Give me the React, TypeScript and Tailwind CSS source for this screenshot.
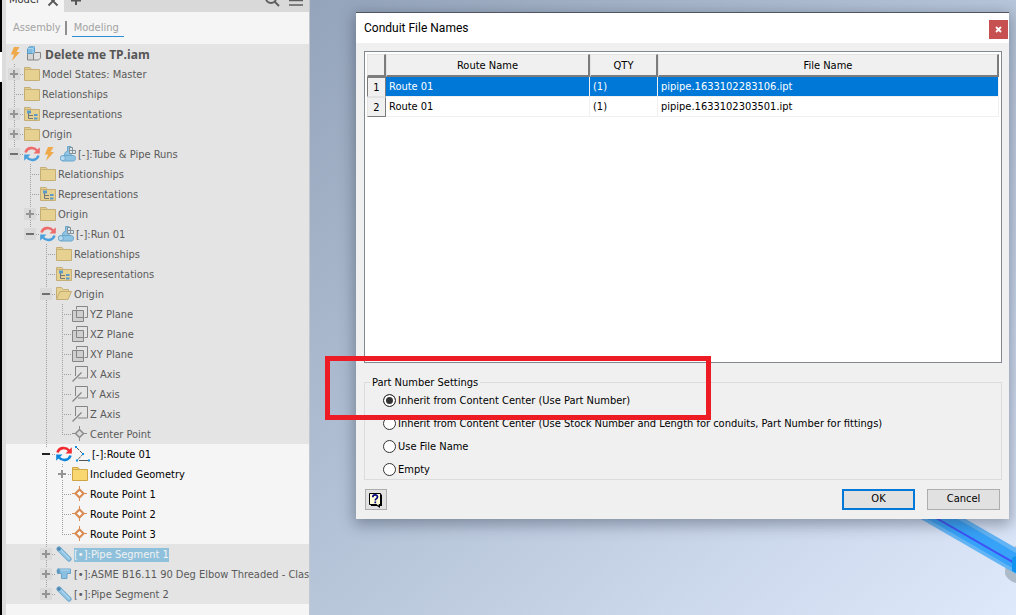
import { useState } from "react";
import type { ReactNode } from "react";

type IconName =
  | "folder"
  | "folderActive"
  | "folderOpen"
  | "views"
  | "plane"
  | "axis"
  | "center"
  | "point"
  | "sync"
  | "syncActive"
  | "bolt"
  | "assembly"
  | "run"
  | "route"
  | "pipe"
  | "elbow";

interface TreeNode {
  label: string;
  depth: number;
  icons: IconName[];
  toggle?: "plus" | "minus";
  last?: boolean;
  active?: boolean;
  selected?: boolean;
}

interface ConduitRow {
  route: string;
  qty: string;
  file: string;
}

const NODES: TreeNode[] = [
  { label: "Model States: Master", depth: 1, icons: ["folder"], toggle: "plus" },
  { label: "Relationships", depth: 1, icons: ["folder"] },
  { label: "Representations", depth: 1, icons: ["views"], toggle: "plus" },
  { label: "Origin", depth: 1, icons: ["folder"], toggle: "plus" },
  { label: "[-]:Tube & Pipe Runs", depth: 1, icons: ["sync", "bolt", "run"], toggle: "minus", last: true },
  { label: "Relationships", depth: 2, icons: ["folder"] },
  { label: "Representations", depth: 2, icons: ["views"] },
  { label: "Origin", depth: 2, icons: ["folder"], toggle: "plus" },
  { label: "[-]:Run 01", depth: 2, icons: ["sync", "run"], toggle: "minus", last: true },
  { label: "Relationships", depth: 3, icons: ["folder"] },
  { label: "Representations", depth: 3, icons: ["views"] },
  { label: "Origin", depth: 3, icons: ["folderOpen"], toggle: "minus" },
  { label: "YZ Plane", depth: 4, icons: ["plane"] },
  { label: "XZ Plane", depth: 4, icons: ["plane"] },
  { label: "XY Plane", depth: 4, icons: ["plane"] },
  { label: "X Axis", depth: 4, icons: ["axis"] },
  { label: "Y Axis", depth: 4, icons: ["axis"] },
  { label: "Z Axis", depth: 4, icons: ["axis"] },
  { label: "Center Point", depth: 4, icons: ["center"], last: true },
  { label: "[-]:Route 01", depth: 3, icons: ["syncActive", "route"], toggle: "minus", active: true },
  { label: "Included Geometry", depth: 4, icons: ["folderActive"], toggle: "plus", active: true },
  { label: "Route Point 1", depth: 4, icons: ["point"], active: true },
  { label: "Route Point 2", depth: 4, icons: ["point"], active: true },
  { label: "Route Point 3", depth: 4, icons: ["point"], last: true, active: true },
  { label: "[•]:Pipe Segment 1", depth: 3, icons: ["pipe"], toggle: "plus", selected: true },
  { label: "[•]:ASME B16.11 90 Deg Elbow Threaded - Class", depth: 3, icons: ["elbow"], toggle: "plus" },
  { label: "[•]:Pipe Segment 2", depth: 3, icons: ["pipe"], toggle: "plus", last: true },
];

const ROWS: ConduitRow[] = [
  { route: "Route 01", qty: "(1)", file: "pipipe.1633102283106.ipt" },
  { route: "Route 01", qty: "(1)", file: "pipipe.1633102303501.ipt" },
];

const SETTINGS = [
  "Inherit from Content Center (Use Part Number)",
  "Inherit from Content Center (Use Stock Number and Length for conduits, Part Number for fittings)",
  "Use File Name",
  "Empty",
];

const folder = (fill: string, stroke: string) => (
  <g fill={fill} stroke={stroke}>
    <path d="M.5 3.5v11h15v-11H7.5z" />
    <path d="M.5 3.5v-2h5.500l1.500 2z" />
  </g>
);

const sync = (red: string, blue: string) => (
  <g fill="none" strokeWidth="2.600">
    <path d="M1.500 6.500C3 1.500 9.500.5 13 4.500" stroke={red} />
    <path d="M15.800 1.200v6.300H9.500z" fill={red} />
    <path d="M14.500 9.500C13 14.500 6.500 15.500 3 11.500" stroke={blue} />
    <path d="M.2 14.800V8.500h6.300z" fill={blue} />
  </g>
);

const ICONS: Record<IconName, ReactNode> = {
  folder: folder("#e6d190", "#c5ae76"),
  folderActive: folder("#f8d771", "#cda544"),
  folderOpen: (
    <g fill="#e6d190" stroke="#c5ae76">
      <path d="M.5 13.500v-12h5l1.500 2h5.500v3" />
      <path d="M.5 13.500l3.500-8h11.500l-3.500 8z" />
    </g>
  ),
  views: (
    <g>
      {folder("#e6d190", "#c5ae76")}
      <path d="M4.500 7v5.500H9M4.500 9.500H9" fill="none" stroke="#777" />
      <path d="M3 4.500h4v3H3zM10 8h3.500v2H10zM10 11.500h3.500v2H10z" fill="#5b9bc9" />
    </g>
  ),
  plane: (
    <g fill="none" stroke="#858585">
      <path d="M4.500 3.500v-3h11v11h-3" />
      <path d="M.5 4.500h11v11H.5z" fill="#cfcfcf" />
      <path d="M4.500 4.500v7h7" />
    </g>
  ),
  axis: (
    <g fill="none" stroke="#858585">
      <path d="M3.500 10V.5h12v11.500H6" />
      <path d="M.5 15.500L9.500 6.500" strokeWidth="1.300" />
    </g>
  ),
  center: (
    <g stroke="#8b8b8b" fill="none">
      <path d="M7.500 0v3M7.500 12v3M0 7.500h3M12 7.500h3" />
      <path d="M7.500 3.500l4 4-4 4-4-4z" fill="#dadada" strokeWidth="1.500" />
    </g>
  ),
  point: (
    <g stroke="#d98d55" fill="none">
      <path d="M7.500 0v3M7.500 12v3M0 7.500h3M12 7.500h3" />
      <path d="M7.500 3.500l4 4-4 4-4-4z" fill="#fff" strokeWidth="2.200" />
    </g>
  ),
  sync: sync("#ee6b6b", "#4b9fdc"),
  syncActive: sync("#f2292f", "#0c86dd"),
  bolt: <path d="M6 1h5.500L8.500 6H12L4 15l2-6.500H2.800z" fill="#f0a94a" />,
  assembly: (
    <g strokeLinejoin="round">
      <path d="M1.500 7.500h6v6.500h-6z" fill="#d4d4d4" stroke="#858585" />
      <path d="M7.500 8l1.500-1.500h5.500V12l-2 2h-5z" fill="#e0e0e0" stroke="#858585" />
      <path d="M1.500 2.500L3.500.8h5v5L7 7.500H1.500z" fill="#7fbce0" stroke="#5a9cc6" />
      <path d="M1.500 2.500H7v5M7 2.500L8.500.8" fill="none" stroke="#a9d4ed" />
    </g>
  ),
  run: (
    <g>
      <path d="M2.500 9.500h11c2.600 0 2.600 5.500 0 5.500h-11z" fill="#8fc3e4" stroke="#6ba6cc" />
      <path d="M4.500 9.500c0-3 1-4 3-4v-5h3.500v9z" fill="#8fc3e4" stroke="#6ba6cc" />
      <circle cx="2.800" cy="12.200" r="2.600" fill="#b5daf0" stroke="#6ba6cc" />
      <path d="M9.500 1.500h3v3h-3zM9.500 4.500h3v3h-3zM12.500 4.500h3v3h-3z" fill="#dfe8ee" stroke="#858f96" />
    </g>
  ),
  route: (
    <g>
      <path d="M3 2l6 6-5.500 6" fill="none" stroke="#555" strokeDasharray="3 1" />
      <path d="M5 14.500h9" stroke="#555" />
      <path d="M1 0h2v2H1zM8 7h2v2H8zM2 13.500h2v2H2zM14 13.500h2v2h-2z" fill="#0f8ce0" />
    </g>
  ),
  pipe: (
    <g strokeLinecap="round">
      <path d="M3 3l10 10" stroke="#6ba4cb" strokeWidth="5" />
      <path d="M3.500 3.500l9.300 9.300" stroke="#93c6e6" strokeWidth="3.500" />
      <path d="M5.500 4.500l8 8" stroke="#b2d9f0" strokeWidth="1" />
      <circle cx="3" cy="3" r="1.800" fill="#4f86ad" />
    </g>
  ),
  elbow: (
    <g fill="#8cc0e0" stroke="#6ba4cb">
      <path d="M1.500 3h13v4.500h-3.500v5H5.500v-5h-4z" strokeLinejoin="round" />
      <path d="M2 4h12" stroke="#b2d9f0" />
      <ellipse cx="2.500" cy="5.200" rx="1.500" ry="2.200" fill="#5f97bd" />
    </g>
  ),
};

const Icon = ({ name }: { name: IconName }) => (
  <svg className="h-4 w-4 shrink-0" viewBox="0 0 16 16" aria-hidden="true">
    {ICONS[name]}
  </svg>
);

// One 16px step of the tree's dotted guide lines
const Guide = ({ node }: { node: TreeNode }) => (
  <svg className="h-5 w-[18px] shrink-0" viewBox="0 0 18 20" aria-hidden="true">
    <path
      d={node.last ? "M8.500 0v10" : "M8.500 0v20"}
      stroke="#a0a0a0"
      strokeDasharray="1 1"
    />
    <path d="M8 10.500h10" stroke="#a0a0a0" strokeDasharray="1 1" />
    {node.toggle && (
      <>
        <path d="M2 4h12v12H2z" fill={node.active ? "#f5f5f5" : "#dadada"} />
        <path
          d={node.toggle === "plus" ? "M4 10h8M8 6v8" : "M4 10h8"}
          stroke={node.toggle === "plus" ? "#949494" : node.active ? "#222" : "#707070"}
          strokeWidth="2"
        />
      </>
    )}
  </svg>
);

const TreeRow = ({ node }: { node: TreeNode }) => {
  const color = node.selected
    ? "bg-[#8fc1dc] text-[#f2f2f2]"
    : node.active
      ? "text-black"
      : "text-[#5a5a5a]";

  return (
    <li className={`flex h-5 items-center ${node.active ? "bg-[#f5f5f5]" : ""}`}>
      {Array.from({ length: node.depth - 1 }, (_, level) => (
        <svg key={level} className="h-5 w-4 shrink-0" viewBox="0 0 16 20" aria-hidden="true">
          {level === 2 && (
            <path d="M8.500 0v20" stroke="#a0a0a0" strokeDasharray="1 1" />
          )}
        </svg>
      ))}
      {node.toggle ? (
        <button className="shrink-0" aria-label={`Toggle ${node.label}`}>
          <Guide node={node} />
        </button>
      ) : (
        <Guide node={node} />
      )}
      <div className="flex shrink-0 items-center gap-[2px]">
        {node.icons.map((name) => (
          <Icon key={name} name={name} />
        ))}
        <span className={`mt-[2px] whitespace-nowrap leading-[14px] ${color}`}>{node.label}</span>
      </div>
    </li>
  );
};

const ModelBrowser = () => (
  <aside className="flex w-[304px] shrink-0 flex-col overflow-hidden border-r border-[#c4c8ce] bg-[#f5f5f5]">
    <div className="flex h-3 shrink-0 items-end overflow-hidden bg-[#d9d9d9] text-[#555]">
      <button className="flex h-[23px] w-[58px] items-center gap-2 bg-[#f5f5f5] pl-[3px] text-[#333]">
        Model
        <svg className="h-3 w-3" viewBox="0 0 12 12" aria-hidden="true">
          <path d="M1.500 1.500l9 9M10.500 1.500l-9 9" stroke="#555" strokeWidth="1.800" />
        </svg>
      </button>
      <button className="flex h-6 w-6 items-center justify-center" aria-label="Add tab">
        <svg className="h-3 w-3" viewBox="0 0 12 12" aria-hidden="true">
          <path d="M6 1v10M1 6.500h10" stroke="#555" strokeWidth="2" />
        </svg>
      </button>
      <button className="ml-auto flex h-6 w-6 items-center justify-center" aria-label="Search">
        <svg className="h-4 w-4" viewBox="0 0 16 16" fill="none" stroke="#5f5f5f" strokeWidth="2" aria-hidden="true">
          <circle cx="7" cy="6" r="5" />
          <path d="M10.500 9.500l4.500 4.500" />
        </svg>
      </button>
      <button className="mr-[1px] flex h-6 w-6 items-center justify-center" aria-label="Menu">
        <svg className="h-4 w-4" viewBox="0 0 16 16" stroke="#5f5f5f" strokeWidth="1.500" aria-hidden="true">
          <path d="M1 4.500h14M1 8.500h14M1 13h14" />
        </svg>
      </button>
    </div>

    <nav className="flex h-8 shrink-0 items-center pl-[7px] text-[#a3a3a3]">
      <button className="leading-4">Assembly</button>
      <span className="mr-[5px] ml-[4px] h-[14px] w-[2px] bg-[#8f8f8f]" />
      <button className="mt-px border-b border-[#2b8fd6] pr-[5px] pl-[2px] leading-4">Modeling</button>
    </nav>

    <ul className="bg-[#e4e4e4]">
      <li className="flex h-5 items-center gap-[2px] pl-[2px]">
        <Icon name="bolt" />
        <Icon name="assembly" />
        <span className="mt-[2px] ml-px font-['Open_Sans','Noto_Sans',sans-serif] text-xs leading-[14px] font-bold text-[#555]">
          Delete me TP.iam
        </span>
      </li>
      {NODES.map((node, index) => (
        <TreeRow key={index} node={node} />
      ))}
    </ul>
  </aside>
);

const headerCell =
  "h-[23px] border-t border-r-2 border-b-2 border-l border-t-[#e3e3e3] border-r-[#7c7c7c] border-b-[#7c7c7c] border-l-[#e3e3e3] bg-[#f0f0f0] p-0 pt-[2px] leading-4 font-normal";

const bodyCell = "h-5 border-r border-b border-[#f0f0f0] p-0 pt-px pl-[3px] leading-4";

const FileTable = () => (
  <div className="h-[312px] border border-[#828790] bg-white p-[2px]">
    <table className="w-full table-fixed border-separate border-spacing-0">
      <thead>
        <tr>
          <th className={`w-[19px] ${headerCell}`} aria-label="Row" />
          <th className={`w-[204px] ${headerCell}`}>Route Name</th>
          <th className={`w-[68px] ${headerCell}`}>QTY</th>
          <th className={headerCell}>File Name</th>
        </tr>
      </thead>
      <tbody>
        {ROWS.map((row, index) => (
          <tr key={row.file} className={index === 0 ? "bg-[#0078d7] text-white" : "bg-white"}>
            <th
              className={`h-5 border bg-[#f0f0f0] p-0 pt-px leading-4 font-normal text-black ${
                index === 0
                  ? "border-[#7c7c7c] border-b-[#e3e3e3]"
                  : "border-[#e3e3e3] border-r-[#7c7c7c] border-b-[#7c7c7c]"
              }`}
            >
              {index + 1}
            </th>
            <td className={bodyCell}>{row.route}</td>
            <td className={bodyCell}>{row.qty}</td>
            <td className={bodyCell}>{row.file}</td>
          </tr>
        ))}
      </tbody>
    </table>
  </div>
);

const ConduitDialog = () => {
  const [setting, setSetting] = useState(0);

  return (
    <section
      role="dialog"
      aria-label="Conduit File Names"
      className="relative border-t border-[#50545c] bg-[#f0f0f0] text-black shadow-[0_4px_14px_2px_rgba(40,50,70,0.4)]"
    >
      <header className="flex h-[30px] items-center justify-between bg-white pr-px pl-2">
        <h1 className="font-['Roboto','Open_Sans',sans-serif] text-xs">Conduit File Names</h1>
        <button
          className="mt-[3px] flex h-[19px] w-[19px] items-center justify-center bg-[#c75050]"
          aria-label="Close"
        >
          <svg className="h-[7px] w-[7px]" viewBox="0 0 7 7" aria-hidden="true">
            <path d="M1 1l5 5M6 1L1 6" stroke="#fff" strokeWidth="1.800" />
          </svg>
        </button>
      </header>

      <div className="pt-2 pr-[7px] pb-[9px] pl-2">
        <FileTable />

        <fieldset className="mt-3 border border-[#dcdcdc] pt-[2px] pb-px pl-[18px]">
          <legend className="-ml-[13px] px-[2px] pt-px leading-[14px]">Part Number Settings</legend>
          <div className="flex flex-col items-start gap-[6px]">
            {SETTINGS.map((label, index) => (
              <label key={label} className="flex h-[17px] items-center gap-[2px]">
                <input
                  type="radio"
                  name="part-number"
                  checked={setting === index}
                  onChange={() => setSetting(index)}
                  className="h-[13px] w-[13px] shrink-0 appearance-none rounded-full border border-[#333] bg-white checked:bg-[#333] checked:shadow-[inset_0_0_0_2px_white]"
                />
                <span className="pt-px leading-4">{label}</span>
              </label>
            ))}
          </div>
        </fieldset>

        <div className="mt-[9px] flex items-center gap-3 pr-[2px] pl-px">
          <button
            className="mr-auto flex h-[21px] w-[22px] items-center justify-center border border-[#adadad] bg-[#e1e1e1]"
            aria-label="Help"
          >
            <svg className="h-4 w-4" viewBox="0 0 16 16" aria-hidden="true">
              <path d="M3 2.500h11v11.500h-2v2l-3-2H3z" fill="#000" />
              <path d="M1.500 1.500h11v11H11v2l-2.500-2h-7z" fill="#ffffd8" stroke="#000" />
              <path d="M4.800 5.200c0-3 4.700-3 4.700-.2 0 1.700-2.200 1.700-2.200 3.500M7.300 9.500v1.700" fill="none" stroke="#000080" strokeWidth="1.700" />
            </svg>
          </button>
          <button className="h-[21px] w-[73px] border-2 border-[#0078d7] bg-[#e1e1e1]">OK</button>
          <button className="h-[21px] w-[73px] border border-[#adadad] bg-[#e1e1e1]">Cancel</button>
        </div>
      </div>

      {/* Callout around the selected setting */}
      <div className="pointer-events-none absolute top-[343px] -left-[31px] h-16 w-[386px] border-[5px] border-[#ed1c24]" />
    </section>
  );
};

const App = () => (
  <div className="flex h-screen overflow-hidden font-['DejaVu_Sans_Condensed','DejaVu_Sans',sans-serif] text-[11px]">
    <div className="flex w-[6px] shrink-0 border-r-4 border-[#dcdcdc] bg-black">
      <div className="mt-[52px] h-[30px] w-full bg-white" />
    </div>
    <ModelBrowser />
    <main className="relative min-w-0 flex-1 overflow-hidden bg-linear-to-br from-[#94a4ba] via-[#b8c6da] to-[#dfe9fc] pt-3 pr-[7px] pl-[46px]">
      <svg className="absolute top-[518px] right-0 h-[97px] w-[98px]" viewBox="0 0 98 97" aria-hidden="true">
        <path d="M98 28c-7 3-11 12-11 28 2 5 7 8 11 9z" fill="#adbac8" />
        <path d="M1 0h45l52 30v26z" fill="#62b4f5" />
        <path d="M8 0h30l60 35v17z" fill="#36a2f8" />
        <path d="M18 0l80 46" stroke="#3f51f5" strokeWidth="2" />
        <path d="M94 40l4-2v17l-4-2z" fill="#0f92f0" />
      </svg>
      <ConduitDialog />
    </main>
  </div>
);

export default App;
